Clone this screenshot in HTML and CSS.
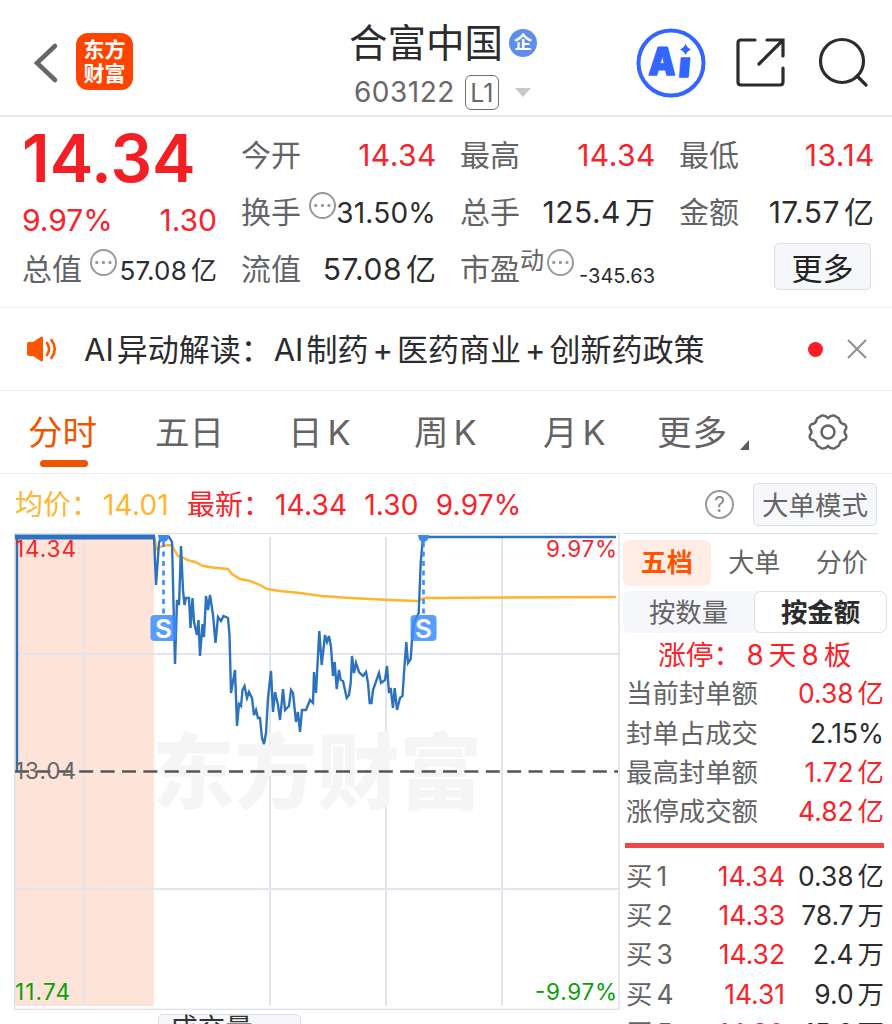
FILE: index.html
```html
<!DOCTYPE html>
<html lang="zh-CN">
<head>
  <meta charset="UTF-8">
  <meta name="viewport" content="width=device-width, initial-scale=1">
  <title>合富中国 603122</title>
  <link rel="stylesheet" href="styles.css">
</head>
<body>
  <header class="header">
    <div class="header-left">
      <svg class="back" width="26" height="42" viewBox="0 0 26 42"><path d="M22 4 4 21 22 38"/></svg>
      <div class="logo"><span>东方</span><span>财富</span></div>
    </div>
    <div class="stock">
      <div class="stock-name">合富中国<span class="corp">企</span></div>
      <div class="stock-code"><span>603122</span><span class="level">L1</span><i class="caret"></i></div>
    </div>
    <div class="header-right">
      <svg class="ai" width="70" height="70" viewBox="0 0 70 70">
        <circle cx="35" cy="35" r="32.5"/>
        <text x="14" y="47" font-size="38" textLength="27" lengthAdjust="spacingAndGlyphs" transform="skewX(-2)">A</text>
        <text x="46" y="49" font-size="35" textLength="12" lengthAdjust="spacingAndGlyphs" transform="skewX(-5)">ı</text>
        <path d="M49.500 15.500Q51 20 55 21.500Q51 23 49.500 27Q48 23 44 21.500Q48 20 49.500 15.500Z"/>
      </svg>
      <svg class="line-icon" width="52" height="52" viewBox="0 0 52 52">
        <path d="M20 4H6Q3 4 3 7V46Q3 49 6 49H45Q48 49 48 46V32M32 4H48V20M47 5 24 28"/>
      </svg>
      <svg class="line-icon search" width="52" height="52" viewBox="0 0 52 52">
        <circle cx="24" cy="24" r="21.500"/><path d="M39 39 48 48"/>
      </svg>
    </div>
  </header>

  <section class="quote">
    <div class="quote-col">
      <div class="price">14.34</div>
      <div class="cell change red"><span>9.97%</span><span>1.30</span></div>
      <div class="cell"><label>总值</label><i class="dots"></i><b class="small">57.08<em>亿</em></b></div>
    </div>
    <div class="quote-col">
      <div class="cell"><label>今开</label><b class="red">14.34</b></div>
      <div class="cell"><label>换手</label><i class="dots"></i><b class="mid">31.50%</b></div>
      <div class="cell"><label>流值</label><b>57.08<em>亿</em></b></div>
    </div>
    <div class="quote-col">
      <div class="cell"><label>最高</label><b class="red">14.34</b></div>
      <div class="cell"><label>总手</label><b>125.4<em>万</em></b></div>
      <div class="cell"><label>市盈<sup>动</sup></label><i class="dots tight"></i><b class="tiny">-345.63</b></div>
    </div>
    <div class="quote-col">
      <div class="cell"><label>最低</label><b class="red">13.14</b></div>
      <div class="cell"><label>金额</label><b>17.57<em>亿</em></b></div>
      <div class="cell"><button class="more">更多</button></div>
    </div>
  </section>

  <section class="notice">
    <svg class="horn" width="32" height="26" viewBox="0 0 32 26">
      <path class="fill" d="M1 8Q1 6 3 6H7L15 .8Q17 0 17 2V24Q17 26 15 25.200L7 20H3Q1 20 1 18Z"/>
      <path d="M21 7Q25 13 21 19M25.500 4Q32 13 25.500 22"/>
    </svg>
    <div class="notice-text">AI<em>异动解读：</em><span>AI</span><em>制药</em><u>+</u>医药商业<u>+</u>创新药政策</div>
    <i class="red-dot"></i>
    <svg class="close" width="20" height="20" viewBox="0 0 20 20"><path d="M1 1 19 19M19 1 1 19"/></svg>
  </section>

  <nav class="tabs">
    <a class="active">分时</a>
    <a>五日</a>
    <a>日<em>K</em></a>
    <a>周<em>K</em></a>
    <a>月<em>K</em></a>
    <a class="more-tab">更多<i class="corner"></i></a>
    <svg class="gear" width="40" height="38" viewBox="0 0 40 38">
      <path d="M14 2.500Q17 2 20 5Q23 2 26 2.500L31 5.500Q32 11 37 11.500Q39 14 38 16Q35 19 38 22Q39 24 37 26.500Q32 27 31 32.500L26 35.500Q23 36 20 33Q17 36 14 35.500L9 32.500Q8 27 3 26.500Q1 24 2 22Q5 19 2 16Q1 14 3 11.500Q8 11 9 5.500Z"/>
      <circle cx="20" cy="19" r="6.500"/>
    </svg>
  </nav>

  <section class="summary">
    <span class="avg">均价：<b>14.01</b></span>
    <span class="latest red">最新：<b>14.34</b><b>1.30</b><b>9.97%</b></span>
    <span class="help">?</span>
    <button class="mode">大单模式</button>
  </section>

  <main class="main">
    <div class="chart-wrap">
      <svg class="chart" width="606" height="477" viewBox="14 533 606 477">
        <rect class="auction" x="15" y="535" width="139" height="471"/>
        <g class="grid">
          <path d="M15 654H619M15 889H619"/>
          <path d="M84.500 537V1006M270 537V1006M386 537V1006M502 537V1006"/>
        </g>
        <path class="frame" d="M619 533V1009.500H14.500V533"/>
        <text class="watermark" x="152" y="802" textLength="330" lengthAdjust="spacingAndGlyphs">东方财富</text>
        <path class="base" d="M15 771.500H618"/>
        <polyline class="avg-line" points="155,538 156,550 159,547 168,545 172,545.500 175,551 178,556 182,557 187,560 195,562 203,566 213,567.500 228,569 232,574 240,579 250,581 260,585 267,589 280,591 300,593 322,596 350,598 390,600 418,601 424,598 500,597.500 616,597"/>
        <polyline class="price-line" points="17,771 17,537 154,537 156,585 159,543 161,537 169,537 172,542 175,664 177,600 179,605 181,546 183,590 184.500,605 186,598 189,598 190.500,628 192.500,598 194,622 197,635 198.500,620 200,656 202.500,624 204,637 206,596 208,610 210,595 213,615 215.500,643 218,617 221,621 223.500,616 228,618 229.500,635 231,693 235,670 237,726 239,704 241,706 242.500,690 244.500,686 247,698 249,692 252,698 254,715 256,710 258,718 260,718 262,738 264,744 266,733 268,698 271,671 273,712 275,692 278,705 280,720 283,689 285,710 289,706 291,690 293,693 296,722 298,712 300,732 302,710 306,710 310,700 313,703 314,672 316,693 319.300,631 321.700,665 325,635 327,642 329,636 331,647 333,676 334.700,662 336.700,689 339,670 340.700,680 343,681 346.700,698 349,695 350.700,683 352,656 354,673 356,663 359,672 363,676 366,672 368,683 369.700,703 371.500,703 373,690 379,673 381,683 385,680 387,666 389,693 390.700,688 393,708 394.700,688 397,710 400,698 402.500,696 404,673 406.300,642 408,663 410.700,659 412,640 414,622 418.700,613 420.700,563 423,537 616,537"/>
        <path class="auction-line" d="M15 537H155"/>
        <g class="signal">
          <path d="M163.500 542V614M423.500 542V614"/>
          <path class="pin" d="M158 535H169Q168.500 542 163.500 542Q158.500 542 158 535ZM418 535H429Q428.500 542 423.500 542Q418.500 542 418 535Z"/>
          <rect x="150.500" y="615" width="26" height="26" rx="4"/>
          <rect x="410.500" y="615" width="26" height="26" rx="4"/>
          <text x="163.500" y="637.500">S</text>
          <text x="423.500" y="637.500">S</text>
        </g>
        <g class="axis">
          <text class="up" x="15" y="557" textLength="61">14.34</text>
          <text class="up" x="546" y="557" textLength="71">9.97%</text>
          <text class="flat" x="15" y="779" textLength="61">13.04</text>
          <text class="down" x="15" y="1000" textLength="55">11.74</text>
          <text class="down" x="535" y="1000" textLength="82">-9.97%</text>
        </g>
      </svg>
      <button class="volume">成交量</button>
    </div>

    <aside class="book">
      <div class="book-tabs"><a class="active">五档</a><a>大单</a><a>分价</a></div>
      <div class="segment"><a>按数量</a><a class="active">按金额</a></div>
      <div class="limit red">涨停：<b>8</b>天<b>8</b>板</div>
      <div class="stat"><span>当前封单额</span><b class="red">0.38<em>亿</em></b></div>
      <div class="stat"><span>封单占成交</span><b>2.15%</b></div>
      <div class="stat"><span>最高封单额</span><b class="red">1.72<em>亿</em></b></div>
      <div class="stat"><span>涨停成交额</span><b class="red">4.82<em>亿</em></b></div>
      <div class="divider"></div>
      <div class="order"><span>买<em>1</em></span><b class="red">14.34</b><b>0.38<em>亿</em></b></div>
      <div class="order"><span>买<em>2</em></span><b class="red">14.33</b><b>78.7<em>万</em></b></div>
      <div class="order"><span>买<em>3</em></span><b class="red">14.32</b><b>2.4<em>万</em></b></div>
      <div class="order"><span>买<em>4</em></span><b class="red">14.31</b><b>9.0<em>万</em></b></div>
      <div class="order"><span>买<em>5</em></span><b class="red">14.30</b><b>15.2<em>万</em></b></div>
    </aside>
  </main>
</body>
</html>
```
FILE: styles.css
```css
* {
  box-sizing: border-box;
}

body {
  margin: 0;
  width: 892px;
  height: 1024px;
  overflow: hidden;
  background: #fff;
  color: #2c2c2e;
  font-family: Inter, "Noto Sans CJK SC", sans-serif;
  font-size: 30px;
  line-height: 1;
}

b, em, i, u, a, label {
  font-style: normal;
  font-weight: 400;
  text-decoration: none;
}

button {
  padding: 0;
  font-family: inherit;
  border: 1.5px solid #dcdde5;
  border-radius: 5px;
  background: #f6f7fa;
}

svg {
  display: block;
  fill: none;
}

.red {
  color: #f8232a;
}

/* header */
.header {
  display: flex;
  height: 117px;
  border-bottom: 2px solid #ececec;
}

.header-left {
  display: flex;
  align-items: flex-start;
  width: 349px;
  padding: 33px 0 0 33px;
}

.back {
  margin: 9px 17px 0 0;
  stroke: #666;
  stroke-width: 4.5;
  stroke-linecap: round;
}

.logo {
  display: flex;
  flex-direction: column;
  align-items: center;
  justify-content: center;
  gap: 3px;
  width: 57px;
  height: 57px;
  border-radius: 12px;
  background: #ff4400;
  color: #fff;
  font-size: 21px;
  font-weight: 700;
}

.stock {
  width: 287px;
  padding-top: 22px;
}

.stock-name {
  display: flex;
  align-items: center;
  height: 42px;
  font-size: 38.5px;
}

.corp {
  width: 28px;
  height: 28px;
  margin-left: 6px;
  border-radius: 50%;
  background: #5e8eec;
  color: #fff;
  font-size: 18px;
  font-weight: 700;
  line-height: 27px;
  text-align: center;
}

.stock-code {
  display: flex;
  align-items: center;
  height: 36px;
  margin: 10px 0 0 5px;
  color: #68686a;
  font-size: 28px;
  letter-spacing: 0.5px;
}

.level {
  width: 34px;
  height: 35px;
  margin-left: 10px;
  border: 1.5px solid #707070;
  border-radius: 6px;
  font-size: 25px;
  letter-spacing: 0;
  line-height: 34px;
  text-align: center;
}

.caret {
  margin-left: 16px;
  border: 8px solid transparent;
  border-top: 9px solid #c8c8c8;
  border-bottom: 0;
}

.header-right {
  display: flex;
  align-items: flex-start;
  padding-top: 28px;
}

.ai circle {
  stroke: #3366ff;
  stroke-width: 4;
}

.ai text {
  fill: #3366ff;
  stroke: #3366ff;
  stroke-width: 1.5;
  stroke-linejoin: round;
  font-weight: 900;
}

.ai path {
  fill: #3366ff;
}

.line-icon {
  margin: 8px 0 0 29px;
  stroke: #2c2c2e;
  stroke-width: 3.2;
  stroke-linecap: round;
}

.line-icon.search {
  margin: 9px 0 0 31px;
}

/* quote numbers */
.quote {
  display: grid;
  grid-template-columns: repeat(4, 195px);
  column-gap: 24px;
  height: 191px;
  padding: 9px 0 0 22px;
  border-bottom: 1px solid #ededf0;
}

.quote-col {
  display: flex;
  flex-direction: column;
}

.cell {
  display: flex;
  align-items: center;
  height: 57px;
  white-space: nowrap;
}

.cell label {
  color: #646466;
  line-height: 36px;
}

.cell b {
  margin-left: auto;
  letter-spacing: 0.5px;
}

.cell b.red {
  margin-right: -1px;
}

.cell em {
  margin-left: 4px;
  letter-spacing: 0;
}

.price {
  height: 66px;
  color: #f41f24;
  font-size: 65.5px;
  font-weight: 600;
  line-height: 66px;
}

.change {
  justify-content: space-between;
  height: 48px;
  padding-top: 8px;
}

.dots {
  width: 27px;
  height: 27px;
  flex: none;
  margin: -12px 0 0 8px;
  border: 2px solid #999;
  border-radius: 50%;
  background:
    radial-gradient(circle, #999 1.3px, transparent 2px) 1.5px 0 / 6.600px 100%;
}

.dots.tight {
  margin-left: 3px;
}

.cell .small {
  padding-top: 5px;
  font-size: 26px;
  letter-spacing: 0.2px;
}

.cell .mid {
  padding-top: 3px;
  font-size: 28px;
  letter-spacing: 0.2px;
}

.cell .tiny {
  padding-top: 14px;
  font-size: 20px;
  letter-spacing: 0;
}

.cell sup {
  position: relative;
  top: -11px;
  vertical-align: baseline;
  font-size: 24px;
  line-height: 0;
}

.more {
  width: 97px;
  height: 47px;
  margin: -5px 3px 0 auto;
  padding-bottom: 4px;
  color: #222;
  font-size: 31px;
}

/* notice */
.notice {
  display: flex;
  align-items: center;
  height: 83px;
  padding: 0 25px 0 26px;
  border-bottom: 1px solid #ededf0;
}

.horn path {
  stroke: #ff5500;
  stroke-width: 2.6;
  stroke-linecap: round;
}

.horn .fill {
  fill: #ff5500;
  stroke: none;
}

.notice-text {
  display: flex;
  align-items: center;
  flex: 1;
  margin-left: 26px;
  padding-top: 1px;
  font-size: 31px;
  white-space: nowrap;
}

.notice-text em {
  margin-left: 3px;
}

.notice-text span {
  margin-left: 2px;
}

.notice-text u {
  margin: 0 4px;
}

.red-dot {
  width: 15px;
  height: 15px;
  margin-right: 24px;
  border-radius: 50%;
  background: #f91d27;
}

.close {
  stroke: #929292;
  stroke-width: 2.2;
}

/* period tabs */
.tabs {
  display: flex;
  height: 83px;
  padding-left: 28px;
  border-bottom: 1px solid #ededf0;
  color: #646466;
  font-size: 34.5px;
}

.tabs a {
  position: relative;
  width: 129px;
  height: 82px;
  line-height: 83px;
  white-space: nowrap;
}

.tabs a:nth-child(2) {
  width: 133px;
}

.tabs a:nth-child(3) {
  width: 126px;
}

.tabs em {
  margin-left: 5px;
}

.tabs .active {
  width: 127px;
  color: #f05500;
}

.tabs .active::after {
  content: "";
  position: absolute;
  left: 12px;
  bottom: 6px;
  width: 48px;
  height: 7px;
  border-radius: 4px;
  background: #ec5500;
}

.tabs .more-tab {
  width: 151px;
  margin-left: -15px;
  letter-spacing: 1px;
}

.corner {
  display: inline-block;
  margin-left: 12px;
  border-left: 9px solid transparent;
  border-bottom: 10px solid #5c5c5e;
  vertical-align: -5px;
}

.gear {
  margin-top: 22px;
  stroke: #666;
  stroke-width: 2.5;
}

/* chart summary */
.summary {
  display: flex;
  align-items: center;
  height: 59px;
  padding: 2px 15px 0;
  font-size: 28px;
}

.avg {
  width: 172px;
  color: #ffb62e;
}

.latest {
  flex: 1;
}

.summary b {
  margin-left: 4px;
  letter-spacing: 0.2px;
}

.latest b + b {
  margin-left: 17px;
}

.help {
  width: 29px;
  height: 29px;
  margin-right: 19px;
  border: 2px solid #999;
  border-radius: 50%;
  color: #888;
  font-size: 21px;
  line-height: 25px;
  text-align: center;
}

.mode {
  width: 124px;
  height: 43px;
  padding-bottom: 2px;
  color: #646466;
  font-size: 26.5px;
}

/* chart */
.main {
  display: flex;
  height: 491px;
  margin-left: 14px;
}

.chart-wrap {
  width: 606px;
  border-top: 1px solid #dfe0e8;
}

.chart {
  margin-top: -1px;
}

.auction {
  fill: #fde3d8;
}

.grid path {
  stroke: #e1e5ee;
  stroke-width: 2;
}

.frame {
  stroke: #dfe0e8;
  stroke-width: 1.5;
}

.watermark {
  fill: #f5f5f5;
  font-size: 82px;
  font-weight: 900;
}

.base {
  stroke: #555;
  stroke-width: 2.4;
  stroke-dasharray: 14 7.4;
}

.avg-line {
  stroke: #ffb52b;
  stroke-width: 2.4;
}

.price-line {
  stroke: #2d72bf;
  stroke-width: 2.4;
}

.auction-line {
  stroke: #2d72c0;
  stroke-width: 5;
}

.signal path {
  stroke: #3c8cff;
  stroke-width: 2.6;
  stroke-dasharray: 5 4.500;
}

.signal .pin {
  fill: #3c88ee;
  stroke: none;
}

.signal rect {
  fill: #3c8cff;
  fill-opacity: 0.85;
}

.signal text {
  fill: #fff;
  font-size: 26px;
  font-weight: 600;
  text-anchor: middle;
}

.axis text {
  font-size: 22.5px;
}

.axis .up {
  fill: #f8232a;
}

.axis .flat {
  fill: #666;
}

.axis .down {
  fill: #0a9f0a;
}

.volume {
  display: block;
  width: 143px;
  height: 34px;
  margin: 4px 0 0 144px;
  padding: 0 36px 7px 0;
  color: #333;
  font-size: 27.5px;
  line-height: 27px;
}

/* order book */
.book {
  width: 267px;
  padding-left: 3px;
  font-size: 26.4px;
}

.book-tabs {
  display: flex;
  width: 255px;
  height: 53px;
  padding-top: 6px;
  border-top: 1px solid #dfe0e8;
  color: #646466;
  font-size: 26px;
  line-height: 46px;
  text-align: center;
}

.book-tabs a {
  flex: none;
  width: 87.5px;
}

.book-tabs .active {
  border-radius: 7px;
  background: #ffece5;
  color: #ff5500;
  font-weight: 700;
}

.segment {
  display: flex;
  width: 264px;
  height: 42px;
  margin-top: 5px;
  border-radius: 7px;
  background: #f6f7fa;
  color: #646466;
  line-height: 42px;
  text-align: center;
}

.segment a {
  flex: 1;
}

.segment .active {
  border: 1px solid #e0e0e3;
  border-radius: 7px;
  background: #fff;
  color: #2c2c2e;
  font-weight: 700;
  line-height: 40px;
}

.limit {
  height: 41px;
  padding-left: 35px;
  font-size: 27.8px;
  line-height: 44px;
  white-space: nowrap;
}

.limit b {
  margin: 0 5px;
}

.stat,
.order {
  display: flex;
  justify-content: space-between;
  align-items: center;
  width: 261px;
  height: 39.3px;
  padding-left: 3px;
}

.stat span,
.order span {
  color: #646466;
}

.stat em,
.order em {
  margin-left: 4px;
}

.divider {
  width: 259px;
  height: 5px;
  margin: 12px 0 8px 2px;
  background: #f04648;
}

.order span {
  width: 60px;
}

.order b {
  width: 98px;
  text-align: right;
}
```
